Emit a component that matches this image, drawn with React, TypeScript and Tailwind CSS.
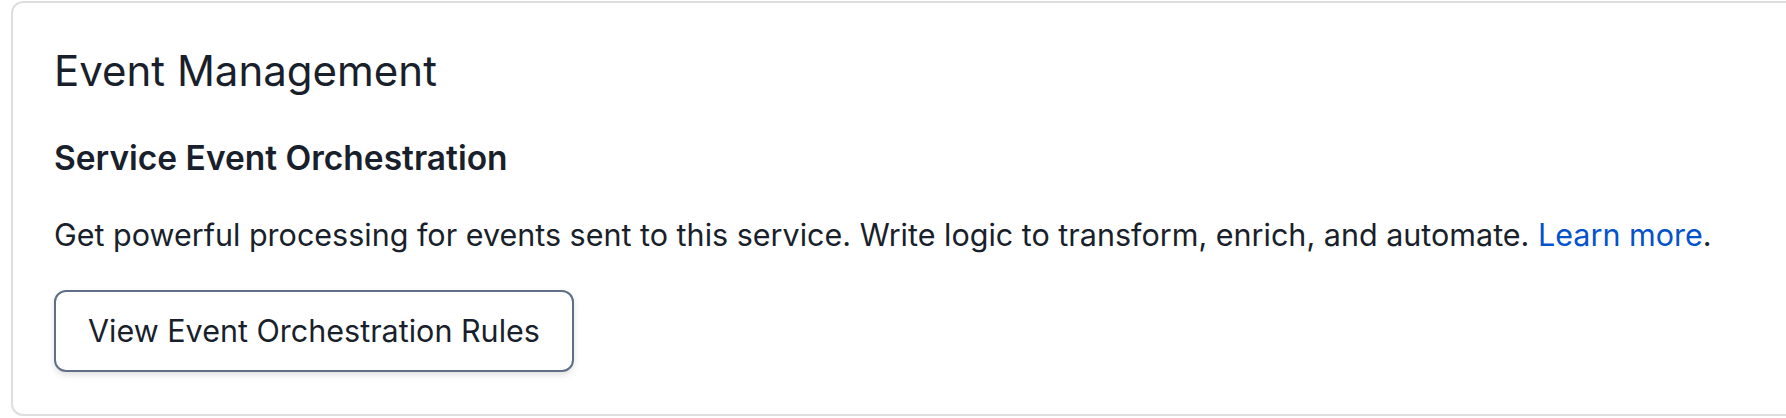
export default function App() {
  return (
    <div className="w-[1786px] h-[418px] overflow-hidden bg-white font-['Inter',sans-serif] text-[#1a1f2c]">

      {/* Card */}
      <div className="ml-[11px] mt-px w-[1820px] rounded-[12px] border-2 border-[#dedede] pl-[41px] pt-[43px] pb-[42px]">

        <h2 className="text-[42px] leading-[50px] font-normal">
          Event Management
        </h2>

        <h3 className="mt-[42px] text-[33.5px] leading-[40px] font-semibold">
          Service Event Orchestration
        </h3>

        <p className="mt-[38px] text-[30.5px] leading-[38px]">
          Get powerful processing for events sent to this service. Write logic to transform, enrich, and automate.{" "}
          <a href="#" className="text-[#0553cb]">Learn more</a>.
        </p>

        <button className="mt-[36px] h-[82px] w-[520px] rounded-[12px] border-2 border-[#5f6f85] bg-white text-[30.5px] leading-[38px] shadow-[0_3px_6px_rgba(0,0,0,0.12)]">
          View Event Orchestration Rules
        </button>

      </div>

    </div>
  );
}
